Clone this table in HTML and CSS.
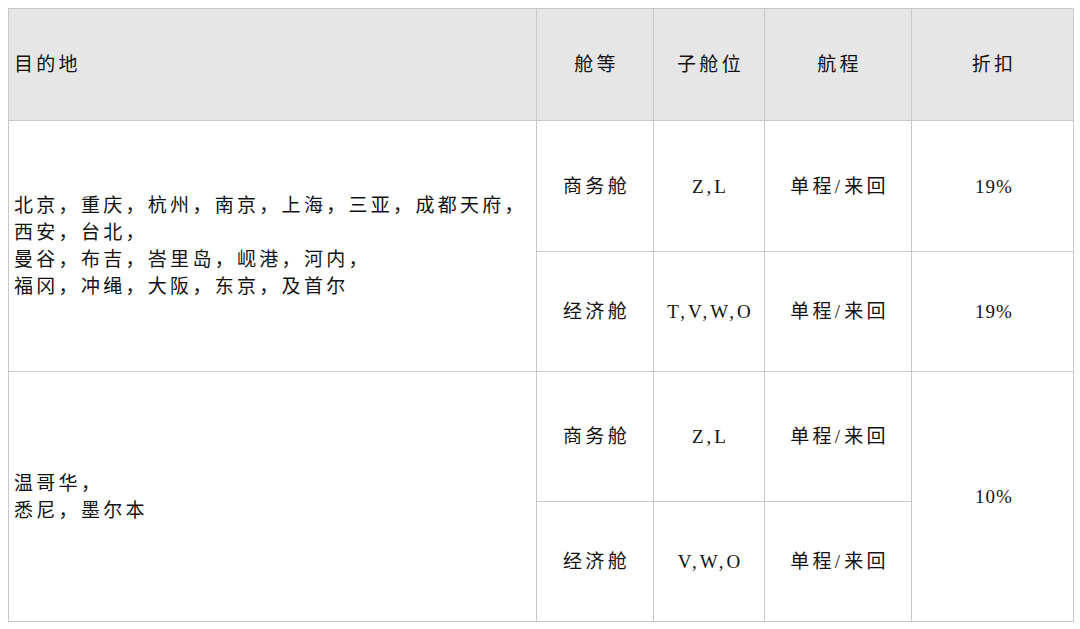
FILE: index.html
```html
<!DOCTYPE html>
<html lang="zh">
<head>
<meta charset="utf-8">
<link rel="stylesheet" href="styles.css">
</head>
<body>
<table class="fares">
  <colgroup>
    <col class="c-dest">
    <col class="c-cabin">
    <col class="c-sub">
    <col class="c-trip">
    <col class="c-disc">
  </colgroup>
  <thead>
    <tr class="head">
      <th class="left">目的地</th>
      <th>舱等</th>
      <th>子舱位</th>
      <th>航程</th>
      <th>折扣</th>
    </tr>
  </thead>
  <tbody>
    <tr class="r1">
      <td class="left dest" rowspan="2">北京，重庆，杭州，南京，上海，三亚，成都天府，<br>西安，台北，<br>曼谷，布吉，峇里岛，岘港，河内，<br>福冈，冲绳，大阪，东京，及首尔</td>
      <td>商务舱</td>
      <td class="latin">Z,L</td>
      <td>单程<span class="slash">/</span>来回</td>
      <td class="latin num">19%</td>
    </tr>
    <tr class="r2">
      <td>经济舱</td>
      <td class="latin">T,V,W,O</td>
      <td>单程<span class="slash">/</span>来回</td>
      <td class="latin num">19%</td>
    </tr>
    <tr class="r3">
      <td class="left dest" rowspan="2">温哥华，<br>悉尼，墨尔本</td>
      <td>商务舱</td>
      <td class="latin">Z,L</td>
      <td>单程<span class="slash">/</span>来回</td>
      <td class="latin num" rowspan="2">10%</td>
    </tr>
    <tr class="r4">
      <td>经济舱</td>
      <td class="latin">V,W,O</td>
      <td>单程<span class="slash">/</span>来回</td>
    </tr>
  </tbody>
</table>
</body>
</html>
```

FILE: styles.css
```css
html, body {
  margin: 0;
  padding: 0;
  background: #ffffff;
}
body {
  padding: 8px;
  font-family: "Liberation Serif", "Noto Sans CJK SC", serif;
  color: #111111;
}
.fares {
  border-collapse: collapse;
  table-layout: fixed;
  width: 1065px;
}
.c-dest { width: 528px; }
.c-cabin { width: 117px; }
.c-sub { width: 111px; }
.c-trip { width: 147px; }
.c-disc { width: 162px; }

.fares th, .fares td {
  border: 1px solid #c9c9c9;
  font-size: 19px;
  font-weight: normal;
  letter-spacing: 3.3px;
  line-height: 27px;
  text-align: center;
  vertical-align: middle;
  padding: 0 0 0 3px;
}
.fares th {
  background: #e6e6e6;
}
.fares .left {
  text-align: left;
  padding-left: 5px;
}
.fares .latin {
  font-size: 19px;
  letter-spacing: 3px;
}
.fares .num {
  letter-spacing: 1px;
}
.slash {
  letter-spacing: 4px;
}
.head { height: 112px; }
.r1 { height: 131px; }
.r2 { height: 120px; }
.r3 { height: 130px; }
.r4 { height: 120px; }
```
